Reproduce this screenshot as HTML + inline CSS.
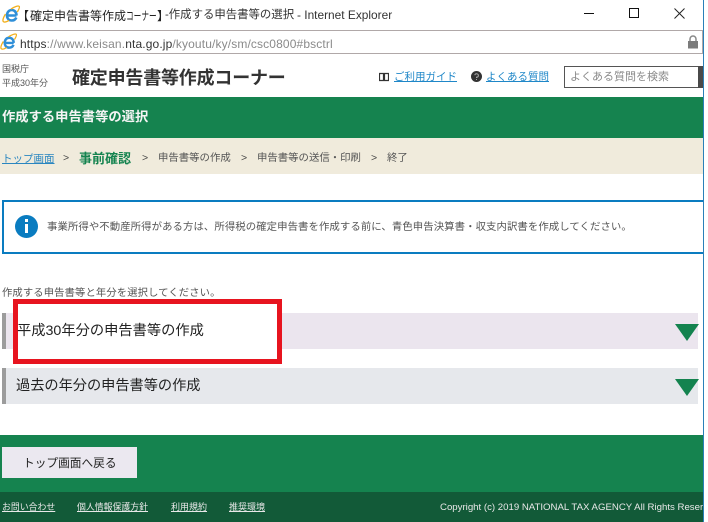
<!DOCTYPE html>
<html lang="ja">
<head>
<meta charset="utf-8">
<title>確定申告書等作成コーナー</title>
<style>
html,body{margin:0;padding:0;background:#fff}
body{width:708px;height:522px;overflow:hidden;position:relative;font-family:"Liberation Sans","Noto Sans CJK JP",sans-serif;color:#333}
.a{position:absolute;white-space:nowrap;line-height:1}
.b{position:absolute}
a{color:inherit}
</style>
</head>
<body>
<!-- Title bar -->
<svg class="b" style="left:2px;top:5px" width="18" height="18" viewBox="0 0 18 18">
<path d="M14.500 10.500H5.500M5 10.500C5 6.800 7.300 5 9.800 5S14.500 7 14.500 10.500M14.300 12.500C13.500 14.500 11.800 15.500 9.800 15.500 7 15.500 5 13.500 5 10.500" fill="none" stroke="#2f8fd8" stroke-width="2.600"/>
<path d="M3.500 9C1 13 0 16.500 2 17 3.500 17.300 5.500 16.300 7 15.300M9 4C12 2 16.500 .2 17.300 1.500 17.800 2.500 16.500 5 15.300 7" fill="none" stroke="#f2b01e" stroke-width="1.300"/>
</svg>
<div class="a" style="left:17px;top:10px;font-size:12px;color:#222">【</div>
<div class="a" style="left:30px;top:10px;font-size:12px;color:#222">確定申告書等作成</div>
<div class="a" style="left:126px;top:10px;font-size:12px;color:#222;transform:scaleX(.64);transform-origin:0 0">コーナー</div>
<div class="a" style="left:157px;top:10px;font-size:12px;color:#222">】</div>
<div class="a" style="left:165px;top:10px;font-size:11.400px;color:#333">-作成する申告書等の選択</div>
<div class="a" style="left:297px;top:10px;font-size:11.900px;color:#333">- Internet Explorer</div>
<div class="b" style="left:584px;top:13px;width:10px;height:1px;background:#111"></div>
<div class="b" style="left:629px;top:8px;width:8px;height:8px;border:1px solid #111"></div>
<svg class="b" style="left:674px;top:8px" width="11" height="11" viewBox="0 0 11 11"><path d="M.5.500L10.500 10.500M10.500.500L.5 10.500" stroke="#222" stroke-width="1"/></svg>

<!-- Address bar -->
<div class="b" style="left:-1px;top:30px;width:702px;height:22px;border:1px solid #b0a8a8;background:#fff"></div>
<svg class="b" style="left:0;top:33px" width="17" height="17" viewBox="0 0 18 18">
<path d="M14.500 10.500H5.500M5 10.500C5 6.800 7.300 5 9.800 5S14.500 7 14.500 10.500M14.300 12.500C13.500 14.500 11.800 15.500 9.800 15.500 7 15.500 5 13.500 5 10.500" fill="none" stroke="#2f8fd8" stroke-width="2.600"/>
<path d="M3.500 9C1 13 0 16.500 2 17 3.500 17.300 5.500 16.300 7 15.300M9 4C12 2 16.500 .2 17.300 1.500 17.800 2.500 16.500 5 15.300 7" fill="none" stroke="#f2b01e" stroke-width="1.300"/>
</svg>
<div class="a" style="left:20px;top:38px;font-size:12px;letter-spacing:.13px;color:#8a8a8a"><span style="color:#333">https</span>://www.keisan.<span style="color:#333">nta.go.jp</span>/kyoutu/ky/sm/csc0800#bsctrl</div>
<svg class="b" style="left:687px;top:35px" width="12" height="14" viewBox="0 0 12 14"><path d="M3 6V4a3 3 0 0 1 6 0v2" fill="none" stroke="#888" stroke-width="1.500"/><rect x="1" y="6" width="10" height="7.500" fill="#7b7b7b"/></svg>

<!-- Site header -->
<div class="a" style="left:2px;top:65px;font-size:9px;color:#555">国税庁</div>
<div class="a" style="left:2px;top:79px;font-size:9px;color:#555">平成30年分</div>
<div class="a" style="left:72px;top:69px;font-size:18px;font-weight:bold;color:#333;letter-spacing:-.2px">確定申告書等作成コーナー</div>
<svg class="b" style="left:379px;top:72px" width="10" height="10" viewBox="0 0 10 10"><path d="M.5 1.500H4.500V8.500H.5zM5.500 1.500H9.500V8.500H5.500z" fill="none" stroke="#333" stroke-width="1.200"/></svg>
<div class="a" style="left:394px;top:72px;font-size:10.500px;color:#1f87c8;text-decoration:underline">ご利用ガイド</div>
<svg class="b" style="left:471px;top:71px" width="11" height="11" viewBox="0 0 11 11"><circle cx="5.500" cy="5.500" r="5.500" fill="#333"/><path d="M3.800 4.200A1.800 1.700 0 1 1 5.500 6.200V7M5.500 8V9" fill="none" stroke="#aaa" stroke-width="1"/></svg>
<div class="a" style="left:486px;top:72px;font-size:10.500px;color:#1f87c8;text-decoration:underline">よくある質問</div>
<div class="b" style="left:564px;top:66px;width:133px;height:20px;border:1px solid #555;background:#fff"></div>
<div class="b" style="left:698px;top:66px;width:5px;height:22px;background:#4a4a4a"></div>
<div class="a" style="left:570px;top:72px;font-size:11px;color:#8a8a8a">よくある質問を検索</div>

<!-- Green heading band -->
<div class="b" style="left:0;top:97px;width:708px;height:41px;background:#15834f"></div>
<div class="a" style="left:2px;top:110px;font-size:13.300px;font-weight:bold;color:#f4f4f4">作成する申告書等の選択</div>

<!-- Breadcrumb -->
<div class="b" style="left:0;top:138px;width:708px;height:36px;background:#f0ebdc"></div>
<div class="a" style="left:2px;top:154px;font-size:10.500px;color:#2a86c0;text-decoration:underline">トップ画面</div>
<div class="a" style="left:63px;top:153px;font-size:10.500px;color:#444">&gt;</div>
<div class="a" style="left:79px;top:152px;font-size:13px;font-weight:bold;color:#14834f">事前確認</div>
<div class="a" style="left:142px;top:153px;font-size:10.500px;color:#444">&gt;</div>
<div class="a" style="left:158px;top:154px;font-size:10.400px;color:#555">申告書等の作成</div>
<div class="a" style="left:241px;top:153px;font-size:10.500px;color:#444">&gt;</div>
<div class="a" style="left:257px;top:154px;font-size:10.400px;color:#555">申告書等の送信・印刷</div>
<div class="a" style="left:371px;top:153px;font-size:10.500px;color:#444">&gt;</div>
<div class="a" style="left:387px;top:154px;font-size:10.400px;color:#555">終了</div>

<!-- Info box -->
<div class="b" style="left:2px;top:200px;width:710px;height:50px;border:2px solid #0a7cc0;background:#fff"></div>
<div class="b" style="left:15px;top:215px;width:23px;height:23px;border-radius:50%;background:#0a7cc0"></div>
<div class="b" style="left:25px;top:219px;width:3px;height:3px;background:#fff"></div>
<div class="b" style="left:25px;top:224px;width:3px;height:9px;background:#fff"></div>
<div class="a" style="left:47px;top:223px;font-size:10.400px;letter-spacing:.07px;color:#555">事業所得や不動産所得がある方は、所得税の確定申告書を作成する前に、青色申告決算書・収支内訳書を作成してください。</div>

<div class="a" style="left:2px;top:289px;font-size:10.300px;letter-spacing:.14px;color:#555">作成する申告書等と年分を選択してください。</div>

<!-- Accordion 1 -->
<div class="b" style="left:2px;top:313px;width:696px;height:36px;background:#ebe5ee"></div>
<div class="b" style="left:2px;top:313px;width:4px;height:36px;background:#9c9c9c"></div>
<svg class="b" style="left:675px;top:324px" width="24" height="17" viewBox="0 0 24 17"><path d="M0 0H24L12 17z" fill="#14834f"/></svg>

<!-- Accordion 2 -->
<div class="b" style="left:2px;top:368px;width:696px;height:36px;background:#e6e8ec"></div>
<div class="b" style="left:2px;top:368px;width:4px;height:36px;background:#9c9c9c"></div>
<svg class="b" style="left:675px;top:379px" width="24" height="17" viewBox="0 0 24 17"><path d="M0 0H24L12 17z" fill="#14834f"/></svg>
<div class="a" style="left:16px;top:379px;font-size:14.200px;color:#222">過去の年分の申告書等の作成</div>

<!-- Red highlight -->
<div class="b" style="left:13px;top:299px;width:259px;height:55px;border:5px solid #e7141f;background:#fff"></div>
<div class="a" style="left:17px;top:324px;font-size:14.250px;color:#222">平成30年分の申告書等の作成</div>

<!-- Green footer area -->
<div class="b" style="left:0;top:435px;width:708px;height:57px;background:#15834f"></div>
<div class="b" style="left:2px;top:447px;width:135px;height:31px;background:#ebe8f0"></div>
<div class="a" style="left:23px;top:458px;font-size:11.700px;color:#222">トップ画面へ戻る</div>

<!-- Dark footer -->
<div class="b" style="left:0;top:492px;width:708px;height:30px;background:#125a38"></div>
<div class="a" style="left:2px;top:503px;font-size:8.900px;color:#e8e8e8;text-decoration:underline">お問い合わせ</div>
<div class="a" style="left:77px;top:503px;font-size:8.900px;color:#e8e8e8;text-decoration:underline">個人情報保護方針</div>
<div class="a" style="left:171px;top:503px;font-size:9px;color:#e8e8e8;text-decoration:underline">利用規約</div>
<div class="a" style="left:229px;top:503px;font-size:9px;color:#e8e8e8;text-decoration:underline">推奨環境</div>
<div class="a" style="left:440px;top:503px;font-size:9.650px;color:#e8e8e8">Copyright (c) 2019 NATIONAL TAX AGENCY All Rights Reser</div>

<!-- Right edge -->
<div class="b" style="left:703px;top:0;width:1px;height:522px;background:#2a80b8"></div>
<div class="b" style="left:704px;top:0;width:4px;height:522px;background:#fff"></div>
</body>
</html>
